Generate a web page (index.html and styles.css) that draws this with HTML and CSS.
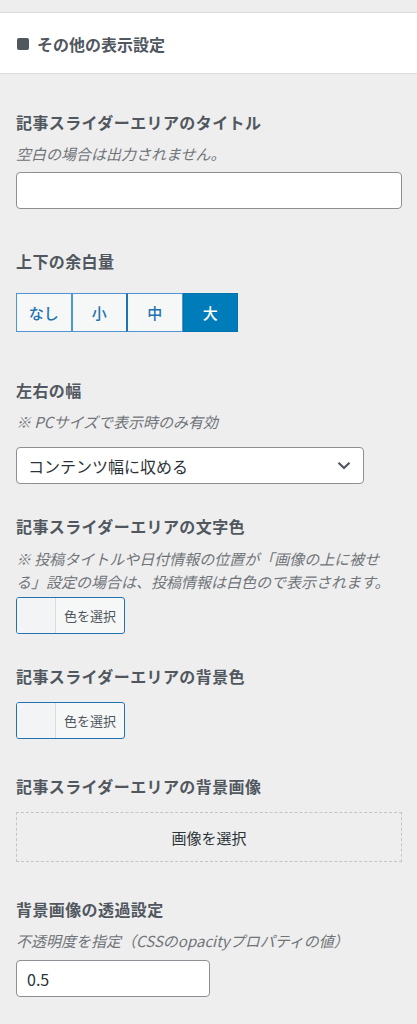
FILE: index.html
```html
<!DOCTYPE html>
<html lang="ja">
<head>
<meta charset="utf-8">
<title>その他の表示設定</title>
<link rel="stylesheet" href="styles.css">
</head>
<body>
<div class="panel">
  <div class="section-head">
    <h3 class="section-title"><span class="square"></span>その他の表示設定</h3>
  </div>

  <div class="controls">
    <div class="control c1">
      <span class="label">記事スライダーエリアのタイトル</span>
      <span class="desc">空白の場合は出力されません。</span>
      <input class="text-input" type="text" value="">
    </div>

    <div class="control c2">
      <span class="label">上下の余白量</span>
      <div class="btn-group">
        <button class="seg">なし</button>
        <button class="seg">小</button>
        <button class="seg">中</button>
        <button class="seg active">大</button>
      </div>
    </div>

    <div class="control c3">
      <span class="label">左右の幅</span>
      <span class="desc">※ PCサイズで表示時のみ有効</span>
      <div class="select">
        <span>コンテンツ幅に収める</span>
        <svg class="chev" width="14" height="9" viewBox="0 0 14 9"><path d="M1.5 1.8 7 7 12.5 1.8" fill="none" stroke="#50575e" stroke-width="2.2"/></svg>
      </div>
    </div>

    <div class="control c4">
      <span class="label">記事スライダーエリアの文字色</span>
      <span class="desc two">※ 投稿タイトルや日付情報の位置が「画像の上に被せ<br>る」設定の場合は、投稿情報は白色ので表示されます。</span>
      <div class="color-btn"><span class="swatch"></span><span class="color-text">色を選択</span></div>
    </div>

    <div class="control c5">
      <span class="label">記事スライダーエリアの背景色</span>
      <div class="color-btn"><span class="swatch"></span><span class="color-text">色を選択</span></div>
    </div>

    <div class="control c6">
      <span class="label">記事スライダーエリアの背景画像</span>
      <div class="upload">画像を選択</div>
    </div>

    <div class="control c7">
      <span class="label">背景画像の透過設定</span>
      <span class="desc">不透明度を指定（CSSのopacityプロパティの値）</span>
      <input class="text-input small" type="text" value="0.5">
    </div>
  </div>
</div>
</body>
</html>
```

FILE: styles.css
```css
* { box-sizing: border-box; }
html, body { margin: 0; padding: 0; }
body {
  background: #eeeeee;
  font-family: "Noto Sans CJK JP", "Noto Sans", sans-serif;
  color: #50575e;
  width: 417px;
  height: 1024px;
  overflow: hidden;
}
.panel { padding-top: 12px; }
.section-head {
  background: #fff;
  border-top: 1px solid #dcdcde;
  border-bottom: 1px solid #dcdcde;
  height: 62px;
  display: flex;
  align-items: center;
  padding-left: 17px;
}
.section-title {
  margin: 0;
  font-size: 16px;
  font-weight: 700;
  line-height: 24px;
  color: #50575e;
  display: flex;
  align-items: center;
  padding-top: 1px;
}
.square {
  width: 12px;
  height: 12px;
  background: #50575e;
  border-radius: 2px;
  margin-right: 8px;
}
.controls { padding: 0 15px 0 16px; }
.control { display: flex; flex-direction: column; align-items: flex-start; }
.label {
  font-size: 16px;
  font-weight: 700;
  line-height: 24px;
  letter-spacing: 0.4px;
  color: #50575e;
}
.desc {
  font-size: 15px;
  font-style: italic;
  line-height: 22px;
  color: #707479;
  margin-top: 9px;
}
.desc.two { line-height: 23px; margin-top: 9px; white-space: nowrap; }
.text-input {
  width: 386px;
  height: 37px;
  border: 1px solid #8c8f94;
  border-radius: 4px;
  background: #fff;
  font-family: inherit;
  font-size: 16px;
  color: #2c3338;
  padding: 0 10px;
  margin: 7px 0 0;
}
.text-input.small { width: 194px; margin-top: 8px; }

.c1 { margin-top: 36px; }
.c2 { margin-top: 40px; }
.c3 { margin-top: 46px; }
.c4 { margin-top: 30px; }
.c5 { margin-top: 30px; }
.c6 { margin-top: 35px; }
.c7 { margin-top: 35px; }

.btn-group { display: flex; margin-top: 20px; }
.seg {
  width: 55.5px;
  height: 39px;
  border: 1.5px solid #4f94d4;
  background: #f6f7f7;
  color: #2271b1;
  font-family: inherit;
  font-size: 15px;
  font-weight: 500;
  padding: 0;
  margin: 0;
}
.seg:nth-child(2) { border-right-color: #2271b1; }
.seg:nth-child(3) { border-left-color: #2271b1; }
.seg.active {
  background: #007cba;
  border-color: #0073aa;
  color: #fff;
}

.select {
  margin-top: 14px;
  width: 348px;
  height: 37px;
  background: #fff;
  border: 1px solid #8c8f94;
  border-radius: 4px;
  display: flex;
  align-items: center;
  justify-content: space-between;
  padding: 0 11px;
  font-size: 16px;
  color: #2c3338;
}
.chev { margin-right: 1px; }

.color-btn {
  margin-top: 4px;
  width: 109px;
  height: 37px;
  border: 1px solid #2271b1;
  border-radius: 3px;
  display: flex;
  overflow: hidden;
  background: #f6f7f7;
}
.c5 .color-btn { margin-top: 14px; }
.swatch {
  width: 39px;
  background: #f3f4f5;
  border-right: 1px solid #dcdcde;
}
.color-text {
  flex: 1;
  display: flex;
  align-items: center;
  justify-content: center;
  font-size: 13px;
  color: #50575e;
}

.upload {
  margin-top: 14px;
  width: 386px;
  height: 50px;
  border: 1px dashed #c3c4c7;
  display: flex;
  align-items: center;
  justify-content: center;
  font-size: 15px;
  color: #2c3338;
}
```
